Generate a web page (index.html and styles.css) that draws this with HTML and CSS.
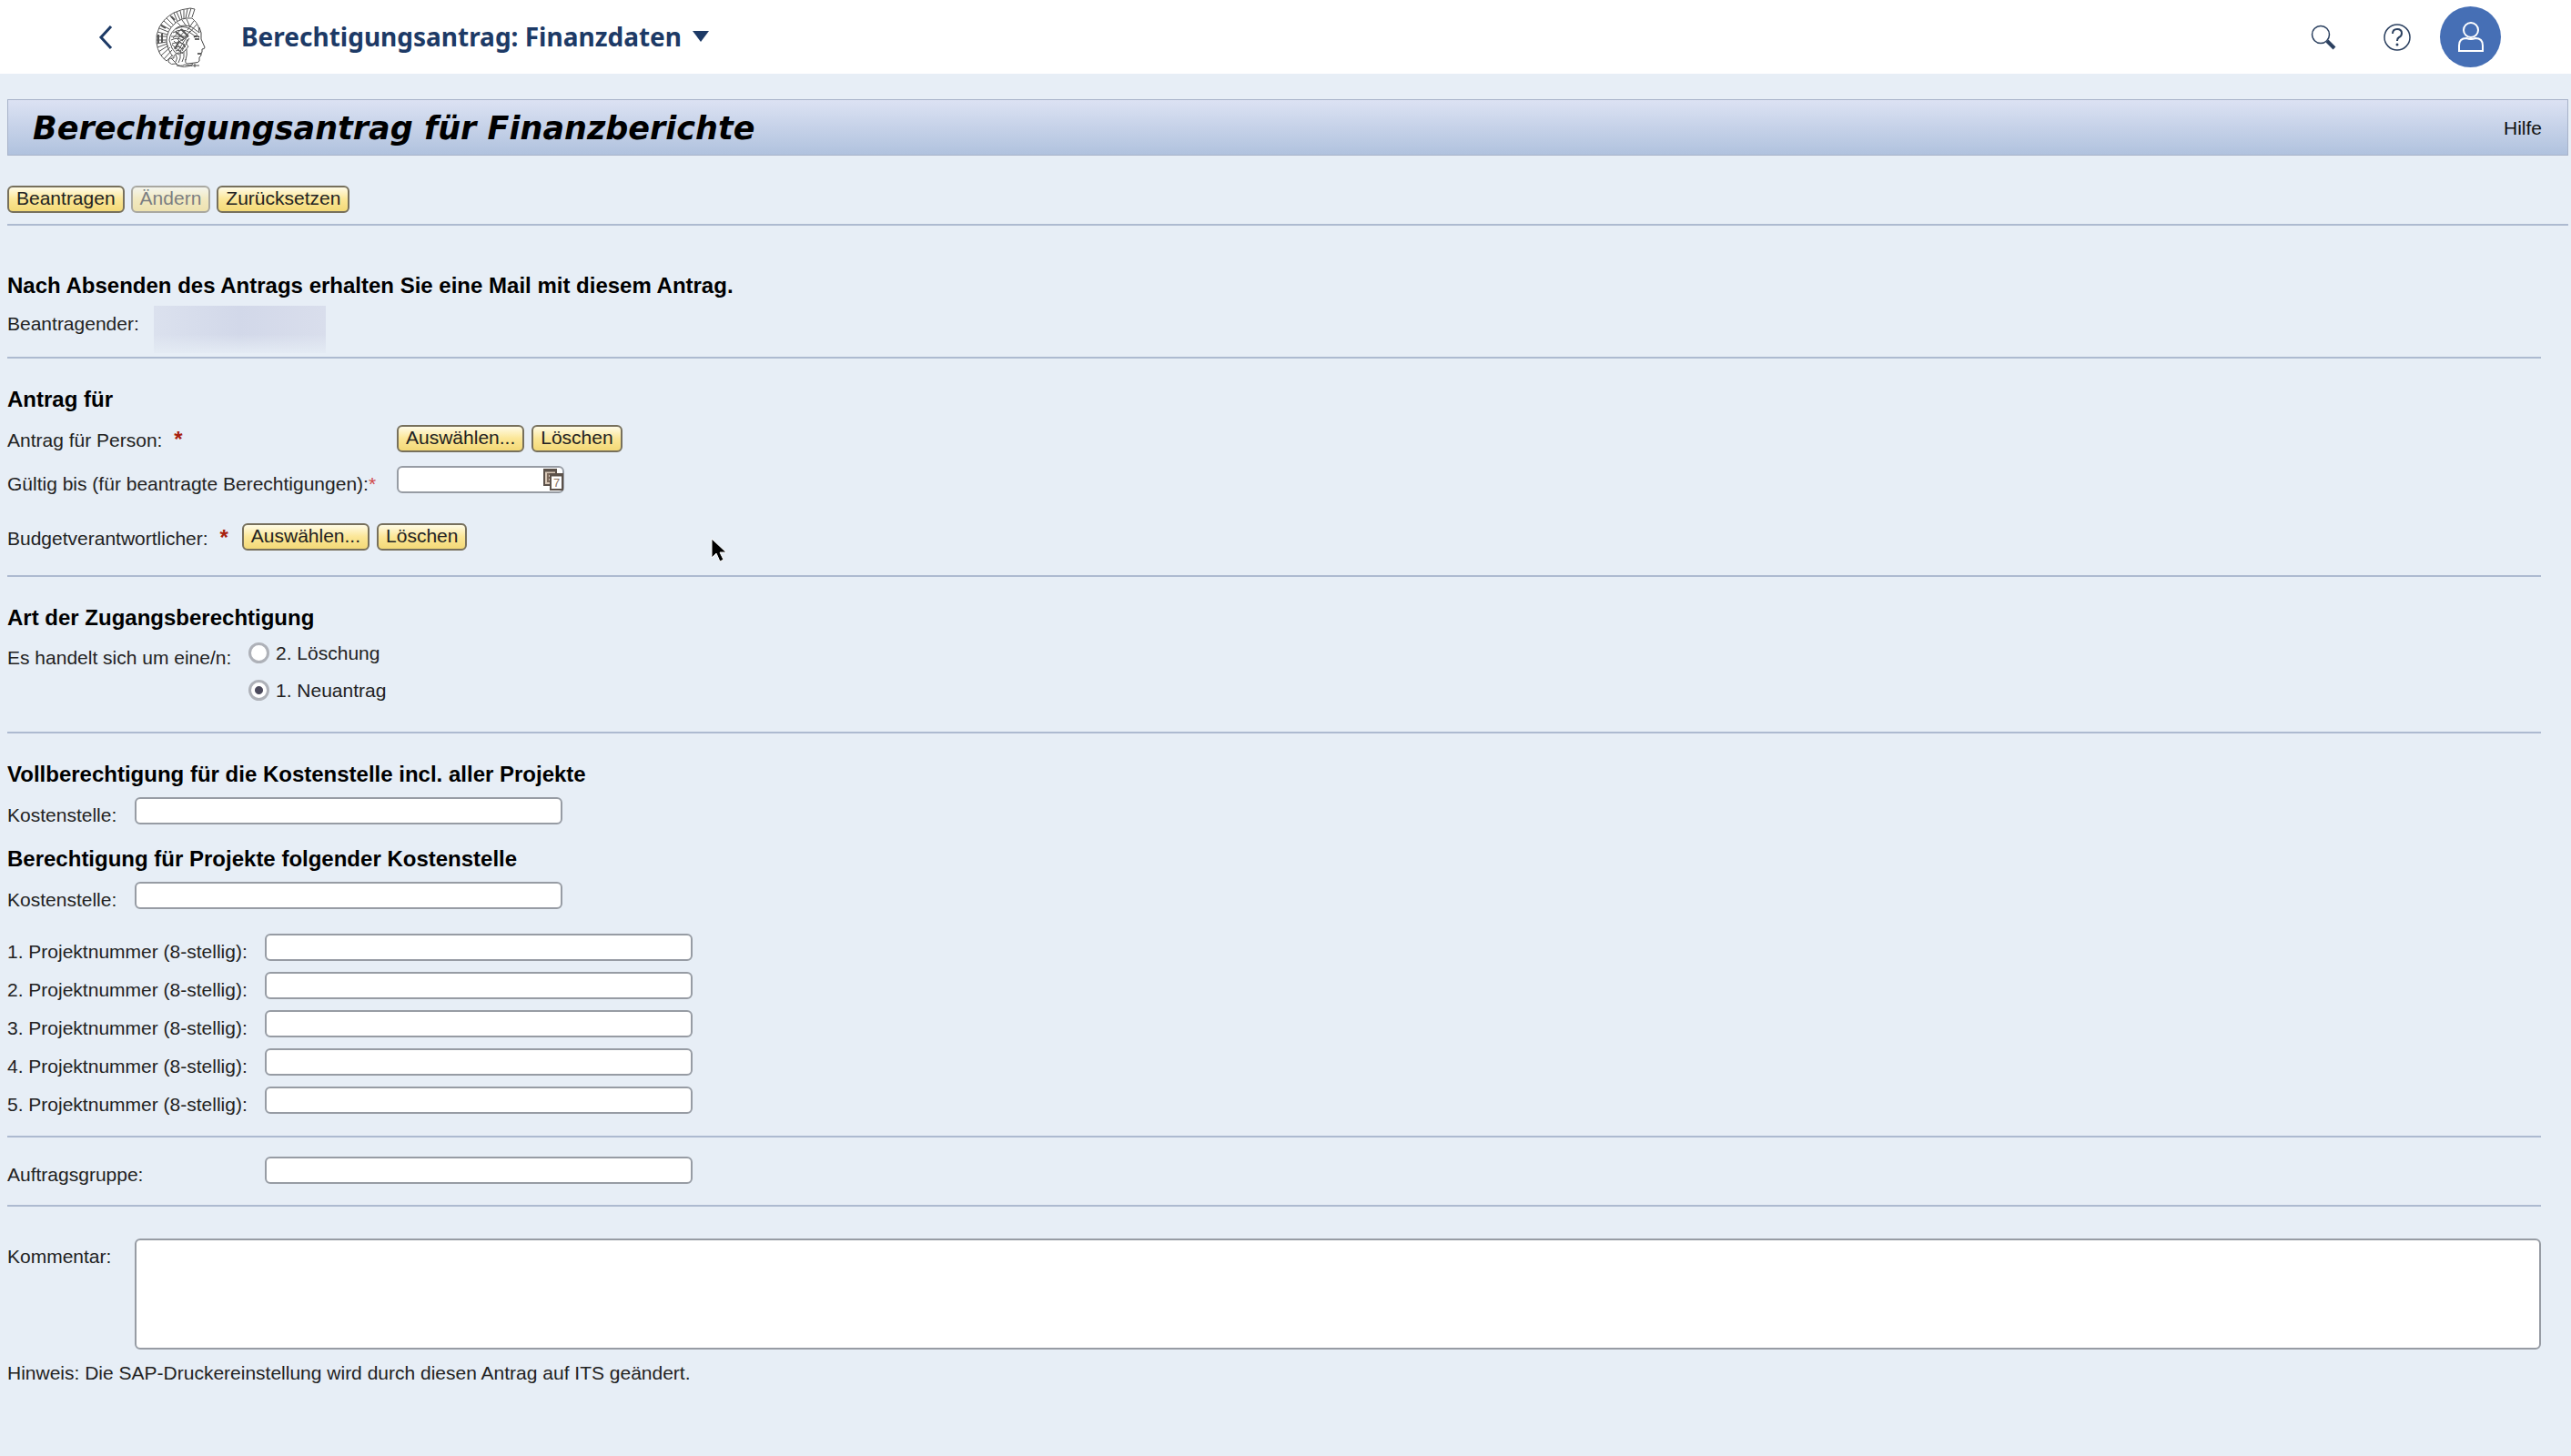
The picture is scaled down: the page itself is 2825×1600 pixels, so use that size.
FILE: index.html
```html
<!DOCTYPE html>
<html lang="de">
<head>
  <meta charset="UTF-8">
  <title>Berechtigungsantrag: Finanzdaten</title>
  <link rel="stylesheet" href="styles.css">
</head>
<body>
<header class="shell">
  <button class="back" type="button" aria-label="Zurück">
    <svg width="18" height="28" viewBox="0 0 18 28"><path d="M15 2 4 14l11 12" fill="none" stroke="#1d3a66" stroke-width="3"/></svg>
  </button>
  <svg class="logo" width="56" height="66" viewBox="0 0 56 66" fill="none" stroke="#555" stroke-width="1">
    <!-- crest -->
    <path d="M43 2 38 1Q28 2 20 6 9 12 4 22 0 30 1 39q2 14 11 20l6-6"/>
    <path d="M43 2l-3 9M39 1l-3 10M35 2l-2 10M31 3v10M27 4l2 9M23 5l4 9M20 6l4 10M16 9l6 8M12 12l8 8M9 15l8 7M6 19l9 5M4 23l10 4M2 27l11 3M1 32h11M1 36h11M1 40l11-2M2 44l11-4M3 49l11-7M6 53l10-9M9 57l9-10"/>
    <path d="M40 12Q28 11 21 18q-9 8-9 19 1 10 7 17"/>
    <path d="M3 30v10M7 29v10M6 20l5 3M17 10l4 4" stroke-width="2"/>
    <!-- helmet -->
    <path d="M40 12q5 4 7 9l1 7-8-6q-8-4-16 0-8 5-9 14l3 9q3 6 8 7"/>
    <path d="M22 24q8-5 16 0l8 6M19 28q10-6 19 0l7 5M17 32h19l-9 5M17 36q8-4 13 1M18 40q8-3 14 1l-5 7M20 44q6-2 10 2M22 48q5-2 8 3"/>
    <path d="M24 17l5 5M29 14l5 7M34 13l4 9M42 15l-7 10M45 19l-8 9M38 26l-8 10M33 25l-9 10M28 24l-9 10M24 35l9 9M20 37l9 9M18 41l10 9M34 33l-9 14M37 34l-8 14"/>
    <path d="M22 27l9 7M28 24l8 8M26 37l-5 9" stroke-width="2"/>
    <!-- hair and neck -->
    <path d="M35 35q-3 5 1 8l-4 5q-4 4-7 2-6 2-5 6-6-1-6 4 3 4 8 2 5 4 10 1 6 2 9-1M22 52q3 4 0 8M27 51q1 5-2 10M31 49q1 6-2 11M34 46q1 6-1 12M17 56l7 7M23 64q8 3 17 0"/>
    <!-- face -->
    <path d="M48 22l2 6v7l4 9q0 2-3 2v3l-1 2v2l-2 2v4q-1 2-5 2l-8 1q-3 0-2-5M43 62v5M39 64h9" stroke="#444"/>
    <path d="M42 33q3-3 6 0M43 35h5M46 51h4" stroke="#333" stroke-width="1.5"/>
  </svg>
  <h1 class="app-title"><button type="button">Berechtigungsantrag: Finanzdaten
    <svg width="18" height="12" viewBox="0 0 18 12"><path d="M0 0h18L9 12z" fill="#1d3a66"/></svg>
  </button></h1>
  <div class="shell-end">
    <button type="button" aria-label="Suchen">
      <svg width="30" height="28" viewBox="0 0 30 28" fill="none" stroke="#2c4160"><circle cx="12" cy="11" r="9.5" stroke-width="1.5"/><path d="M19 18l8 8" stroke-width="4"/></svg>
    </button>
    <button type="button" aria-label="Hilfe">
      <svg width="32" height="32" viewBox="0 0 32 32" fill="none" stroke="#2c4160"><circle cx="16" cy="16" r="14" stroke-width="1.5"/><path d="M11 12q0-5 5-5t5 4.500q0 3-3 4.500-2 1-2 4" stroke-width="2"/><circle cx="16" cy="24" r="1.500" fill="#2c4160" stroke="none"/></svg>
    </button>
    <button class="avatar" type="button" aria-label="Benutzer">
      <svg width="30" height="36" viewBox="0 0 30 36" fill="none" stroke="#fff" stroke-width="2"><circle cx="15" cy="10" r="8"/><path d="M2 33v-6q0-8 8-8 5 2 10 0 8 0 8 8v6z"/></svg>
    </button>
  </div>
</header>

<div class="page-title">
  <h2>Berechtigungsantrag für Finanzberichte</h2>
  <a href="#">Hilfe</a>
</div>
<div class="toolbar">
  <button class="btn" type="button">Beantragen</button>
  <button class="btn" type="button" disabled>Ändern</button>
  <button class="btn" type="button">Zurücksetzen</button>
</div>

<form class="form">
  <section class="intro">
    <h3>Nach Absenden des Antrags erhalten Sie eine Mail mit diesem Antrag.</h3>
    <div class="row">
      <span class="label">Beantragender:</span>
      <span class="masked"></span>
    </div>
  </section>

  <section class="request">
    <h3>Antrag für</h3>
    <div class="row wide buttons">
      <span class="label">Antrag für Person: <b class="req">*</b></span>
      <button class="btn" type="button">Auswählen...</button>
      <button class="btn" type="button">Löschen</button>
    </div>
    <div class="row wide">
      <label class="label" for="valid">Gültig bis (für beantragte Berechtigungen):<span class="star">*</span></label>
      <span class="date">
        <input class="field" id="valid" type="text">
        <button type="button" aria-label="Kalender">
          <svg width="24" height="26" viewBox="0 0 24 26"><path d="M2 2h13v17H2z" fill="#d8c8b8" stroke="#5c524b" stroke-width="2"/><path d="M1 3h15" stroke="#5c524b" stroke-width="3"/><path d="M10 7H6v8h3M6 11h3" fill="none" stroke="#7d6a5c" stroke-width="2"/><path d="M9 7h13v17H9z" fill="#fff" stroke="#5c524b" stroke-width="2"/><path d="M8 8h15" stroke="#5c524b" stroke-width="3"/><text x="12" y="21" font-size="13" fill="#8a7362">7</text></svg>
        </button>
      </span>
    </div>
    <div class="row buttons budget">
      <span class="label">Budgetverantwortlicher: <b class="req">*</b></span>
      <button class="btn" type="button">Auswählen...</button>
      <button class="btn" type="button">Löschen</button>
    </div>
  </section>

  <section class="access">
    <h3>Art der Zugangsberechtigung</h3>
    <div class="row kind">
      <span class="label" id="kind">Es handelt sich um eine/n:</span>
      <div class="radios" role="radiogroup" aria-labelledby="kind">
        <label><input type="radio" name="kind">2. Löschung</label>
        <label><input type="radio" name="kind" checked>1. Neuantrag</label>
      </div>
    </div>
  </section>

  <section class="projects">
    <h3>Vollberechtigung für die Kostenstelle incl. aller Projekte</h3>
    <div class="row narrow">
      <label class="label" for="kst1">Kostenstelle:</label>
      <input class="field" id="kst1" type="text">
    </div>
    <h3>Berechtigung für Projekte folgender Kostenstelle</h3>
    <div class="row narrow">
      <label class="label" for="kst2">Kostenstelle:</label>
      <input class="field" id="kst2" type="text">
    </div>
    <div class="numbers">
      <div class="row medium">
        <label class="label" for="p1">1. Projektnummer (8-stellig):</label>
        <input class="field" id="p1" type="text">
      </div>
      <div class="row medium">
        <label class="label" for="p2">2. Projektnummer (8-stellig):</label>
        <input class="field" id="p2" type="text">
      </div>
      <div class="row medium">
        <label class="label" for="p3">3. Projektnummer (8-stellig):</label>
        <input class="field" id="p3" type="text">
      </div>
      <div class="row medium">
        <label class="label" for="p4">4. Projektnummer (8-stellig):</label>
        <input class="field" id="p4" type="text">
      </div>
      <div class="row medium">
        <label class="label" for="p5">5. Projektnummer (8-stellig):</label>
        <input class="field" id="p5" type="text">
      </div>
    </div>
  </section>

  <section class="group">
    <div class="row medium">
      <label class="label" for="group">Auftragsgruppe:</label>
      <input class="field" id="group" type="text">
    </div>
  </section>

  <section class="comment">
    <div class="row narrow">
      <label class="label" for="comment">Kommentar:</label>
      <textarea class="field" id="comment"></textarea>
    </div>
    <p>Hinweis: Die SAP-Druckereinstellung wird durch diesen Antrag auf ITS geändert.</p>
  </section>
</form>

<svg class="pointer" width="18" height="28" viewBox="0 0 18 28"><path d="M1 1v21l5-5 4 9 4-2-4-8h7z" fill="#000" stroke="#fff" stroke-width="1"/></svg>
</body>
</html>
```

FILE: styles.css
```css
*{box-sizing:border-box;}
body,h1,h2,h3,p{margin:0;padding:0;}
body{min-height:100vh;background:#e7eef6;color:#222;font:21px/24px "Liberation Sans",Arial,sans-serif;}
button,input,textarea{font:inherit;color:inherit;margin:0;}
svg{display:block;}

/* shell bar */
.shell{display:flex;align-items:center;height:81px;padding:0 77px 0 107px;background:#fff;}
.shell button{display:flex;align-items:center;justify-content:center;padding:0;border:0;background:none;cursor:pointer;}
.logo{margin:0 38px 0 46px;}
.app-title{padding-bottom:2px;color:#1d3a66;font:bold 28px/40px "Noto Sans","Open Sans",sans-serif;}
.shell .app-title button{gap:12px;}
.shell-end{display:flex;gap:14px;margin-left:auto;}
.shell-end button{width:67px;height:67px;}
.shell-end .avatar{border-radius:50%;background:#466fb5;}

.page-title{display:flex;align-items:center;justify-content:space-between;height:62px;margin:28px 3px 0 8px;padding:2px 28px 0 27px;border:1px solid #a8b3c9;background:linear-gradient(#dce2f3,#b0c2de);}
.page-title h2{color:#000;font:italic bold 35px/44px "DejaVu Sans",Verdana,sans-serif;}
.page-title a{color:#111;text-decoration:none;}
.toolbar{display:flex;gap:7px;margin:0 3px 0 8px;padding:33px 0 12px;border-bottom:2px solid #adbad0;}

.btn{height:30px;padding:0 8px 2px;border:2px solid #77705c;border-radius:6px;background:linear-gradient(#fffbe6,#fbe696 50%,#f3d977);color:#222;line-height:24px;cursor:pointer;}
.btn:disabled{opacity:.55;cursor:default;}

/* form */
.form{margin:0 33px 0 8px;}
.form section{border-bottom:2px solid #adbad0;}
.form h3{color:#000;font-size:24px;line-height:28px;}
.row{display:flex;align-items:flex-start;}
.label{flex:none;padding-top:8px;}
.wide .label{width:428px;}
.medium .label{width:283px;}
.narrow .label{width:140px;}
.buttons{gap:8px;}
.buttons .label{padding-top:4px;}
.wide.buttons .label{width:420px;}
.field{width:470px;height:30px;padding:0 6px;border:2px solid #979ca4;border-radius:6px;background:#fff;}
.req{margin:0 7px;color:#a8200d;font-size:24px;line-height:24px;}
.star{color:#d04848;}

.form .intro{padding:52px 0 4px;}
.intro .row{gap:16px;margin-top:8px;}
.masked{width:189px;height:52px;background:linear-gradient(rgba(231,238,246,0) 60%,#e4ebf4),linear-gradient(90deg,#dbe1ee,#d2d8e9 50%,#d9deec);}

.form .request{padding:31px 0 27px;}
.request h3{margin-bottom:14px;}
.request .row + .row{margin-top:15px;}
.request .row.budget{margin-top:31px;}
.date{position:relative;width:184px;}
.date .field{width:100%;display:block;}
.date button{position:absolute;top:2px;right:0;padding:0;border:0;background:none;}

.form .access{padding:31px 0 33px;}
.kind{gap:16px;margin-top:13px;}
.kind .label{width:249px;padding-top:5px;}
.radios{display:grid;gap:17px;}
.radios label{display:flex;gap:7px;}
.radios input{appearance:none;width:23px;height:23px;border:3px solid #aeb1b8;border-radius:50%;background:#fff;}
.radios input:checked{background:radial-gradient(circle,#4c4a5c 4px,#fff 5px);}

.form .projects{padding:31px 0 22px;}
.projects h3{margin-bottom:11px;}
.projects .row + h3{margin-top:22px;}
.numbers{display:grid;gap:10px;margin-top:25px;}
.form .group{padding:21px 0;}
.form .comment{padding-top:35px;border:0;}
.comment textarea{flex:1;height:122px;resize:none;}
.comment p{margin-top:14px;}

.pointer{position:absolute;left:781px;top:591px;}
```
